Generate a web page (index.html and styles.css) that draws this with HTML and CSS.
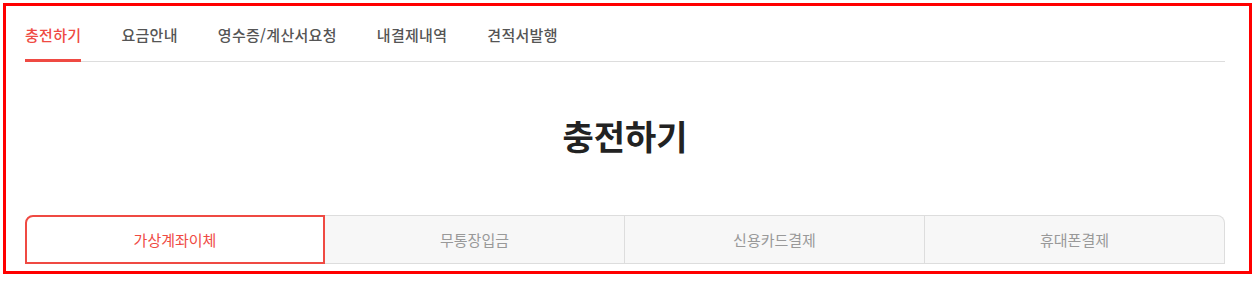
FILE: index.html
```html
<!DOCTYPE html>
<html lang="ko">
<head>
<meta charset="utf-8">
<title>충전하기</title>
<link rel="stylesheet" href="styles.css">
</head>
<body>
<div class="frame">
  <div class="inner">
    <ul class="gnb">
      <li class="gnb-item active">충전하기</li>
      <li class="gnb-item">요금안내</li>
      <li class="gnb-item">영수증/계산서요청</li>
      <li class="gnb-item">내결제내역</li>
      <li class="gnb-item">견적서발행</li>
    </ul>
    <h1 class="title">충전하기</h1>
    <ul class="pay-tabs">
      <li class="pay-tab active">가상계좌이체</li>
      <li class="pay-tab">무통장입금</li>
      <li class="pay-tab">신용카드결제</li>
      <li class="pay-tab last">휴대폰결제</li>
    </ul>
  </div>
</div>
</body>
</html>
```
FILE: styles.css
```css
* { box-sizing: border-box; }
html, body { margin: 0; padding: 0; background: #fff; }
body {
  font-family: "Noto Sans CJK KR", "Noto Sans", sans-serif;
  color: #333;
}
.frame {
  margin: 3px;
  width: 1249px;
  height: 271px;
  border: 3px solid #ff0000;
  overflow: hidden;
}
.inner {
  width: 1200px;
  margin-left: 19px;
}
.gnb {
  list-style: none;
  margin: 0;
  padding: 19px 0 0;
  display: flex;
  gap: 40px;
  border-bottom: 1px solid #dddddd;
}
.gnb-item {
  font-size: 15px;
  line-height: 20px;
  font-weight: 500;
  letter-spacing: 0.3px;
  color: #555;
  padding-bottom: 14px;
  border-bottom: 3px solid transparent;
  margin-bottom: -1px;
}
.gnb-item.active {
  color: #ef4a43;
  border-bottom-color: #ef4a43;
}
.title {
  margin: 0;
  padding: 50px 0 0;
  margin-bottom: 55px;
  text-align: center;
  font-size: 34px;
  line-height: 48px;
  font-weight: 700;
  color: #222;
}
.pay-tabs {
  list-style: none;
  margin: 0;
  padding: 0;
  display: flex;
}
.pay-tab {
  flex: none;
  width: 300px;
  height: 49px;
  display: flex;
  align-items: center;
  justify-content: center;
  font-size: 15px;
  color: #999;
  background: #f7f7f7;
  border-top: 1px solid #dddddd;
  border-bottom: 1px solid #dddddd;
  border-right: 1px solid #dddddd;
}
.pay-tab.active {
  background: #fff;
  color: #ef4a43;
  border: 2px solid #ef4a43;
  border-top-left-radius: 8px;
}
.pay-tab.last {
  border-top-right-radius: 8px;
}
```
